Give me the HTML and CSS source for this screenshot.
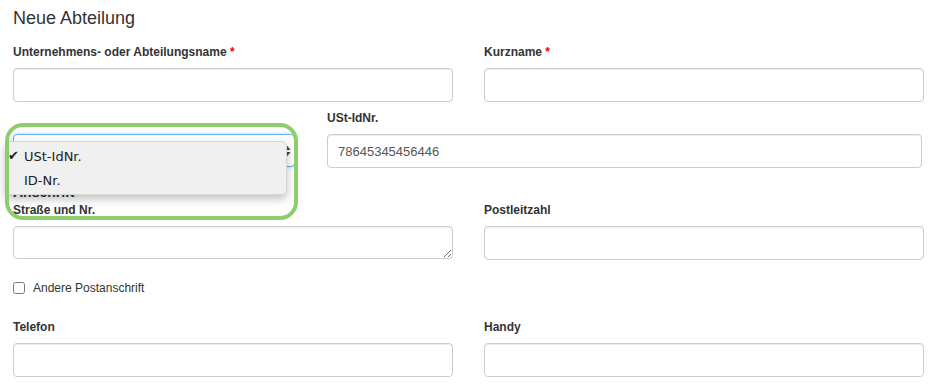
FILE: index.html
```html
<!DOCTYPE html>
<html>
  <head>
    <meta charset="utf-8">
    <meta name="viewport" content="width=device-width, initial-scale=1">
    <title>Neue Abteilung</title>
    <link rel="stylesheet" href="styles.css">
  </head>
  <body>
    <div class="page">
      <h1 class="page__header">Neue Abteilung</h1>

      <div class="row">
        <div class="field">
          <label class="field__label">Unternehmens- oder Abteilungsname <span class="req">*</span></label>
          <input class="text-input">
        </div>
        <div class="field">
          <label class="field__label">Kurzname <span class="req">*</span></label>
          <input class="text-input">
        </div>
      </div>

      <div class="row row--id">
        <div class="field field--select">
          <div class="select-wrap">
            <div class="select-box">
              <svg class="select-box__arrows" width="7" height="12" viewBox="0 0 7 12">
                <path d="M0.5 5 L3.5 1 L6.5 5 Z M0.5 7 L3.5 11 L6.5 7 Z" fill="#444"/>
              </svg>
            </div>
            <div class="dropdown">
              <div class="dropdown__item dropdown__item--checked">USt-IdNr.</div>
              <div class="dropdown__item">ID-Nr.</div>
            </div>
            <div class="highlight"></div>
          </div>
        </div>
        <div class="field">
          <label class="field__label">USt-IdNr.</label>
          <input class="text-input" value="78645345456446">
        </div>
      </div>

      <div class="section-label">Anschrift</div>

      <div class="row">
        <div class="field">
          <label class="field__label">Straße und Nr.</label>
          <textarea class="text-input text-input--area"></textarea>
        </div>
        <div class="field">
          <label class="field__label">Postleitzahl</label>
          <input class="text-input">
        </div>
      </div>

      <label class="check">
        <input type="checkbox" class="check__box">
        <span>Andere Postanschrift</span>
      </label>

      <div class="row">
        <div class="field">
          <label class="field__label">Telefon</label>
          <input class="text-input">
        </div>
        <div class="field">
          <label class="field__label">Handy</label>
          <input class="text-input">
        </div>
      </div>
    </div>
  </body>
</html>
```

FILE: styles.css
```css
html {
  font-family: "Liberation Sans", Arial, Helvetica, sans-serif;
  color: #333;
  background: #fff;
  margin: 0;
  padding: 0;
}

body {
  margin: 0;
  padding: 0;
}

.page {
  padding: 8px 13px 0;
  width: 911px;
}

.page__header {
  font-size: 18px;
  font-weight: normal;
  line-height: 20px;
  margin: 0 0 16px;
}

.row {
  display: grid;
  grid-template-columns: 440px 440px;
  column-gap: 31px;
  margin-bottom: 8px;
}

.row--id {
  grid-template-columns: 282px 595px;
  column-gap: 32px;
  margin-bottom: 0;
}

.field__label {
  display: block;
  font-size: 12px;
  font-weight: bold;
  line-height: 17px;
  margin-bottom: 7px;
}

.req {
  color: #e00;
}

.text-input {
  display: block;
  box-sizing: border-box;
  width: 100%;
  height: 34px;
  margin: 0;
  padding: 6px 10px;
  border: 1px solid #ccc;
  border-radius: 4px;
  box-shadow: inset 0 1px 1px rgba(0, 0, 0, 0.075);
  font-family: inherit;
  font-size: 13px;
  color: #555;
  background: #fff;
}

.text-input--area {
  height: 33px;
  resize: vertical;
}

.field--select {
  padding-top: 24px;
}

.select-wrap {
  position: relative;
}

.select-box {
  box-sizing: border-box;
  height: 33px;
  border: 1px solid #66afe9;
  border-radius: 4px;
  box-shadow: 0 0 4px rgba(102, 175, 233, 0.5);
  background: #fff;
  display: flex;
  align-items: center;
  justify-content: flex-end;
  padding-right: 3px;
}

.dropdown {
  position: absolute;
  left: -8px;
  top: 7px;
  width: 282px;
  box-sizing: border-box;
  padding: 3px 0 1px;
  background: #f0f0f0;
  border: 1px solid #d6d6d6;
  border-radius: 5px;
  box-shadow: 0 4px 10px rgba(0, 0, 0, 0.25);
  font-family: "DejaVu Sans", "Liberation Sans", sans-serif;
  font-size: 13px;
  color: #222;
  z-index: 2;
}

.dropdown__item {
  line-height: 24px;
  padding-left: 18px;
  position: relative;
}

.dropdown__item--checked:before {
  content: '\2714';
  position: absolute;
  left: 2px;
  top: -1px;
  font-size: 13px;
}

.highlight {
  position: absolute;
  left: -8px;
  top: -11px;
  width: 293px;
  height: 97px;
  box-sizing: border-box;
  border: 4px solid #8dce6c;
  border-radius: 18px;
  z-index: 3;
}

.section-label {
  font-size: 14px;
  font-weight: bold;
  line-height: 17px;
  margin: 16px 0 1px;
}

.check {
  display: flex;
  align-items: center;
  gap: 8px;
  height: 18px;
  margin: 19px 0 22px;
  font-size: 12px;
}

.check__box {
  width: 12px;
  height: 12px;
  margin: 0;
}
```
